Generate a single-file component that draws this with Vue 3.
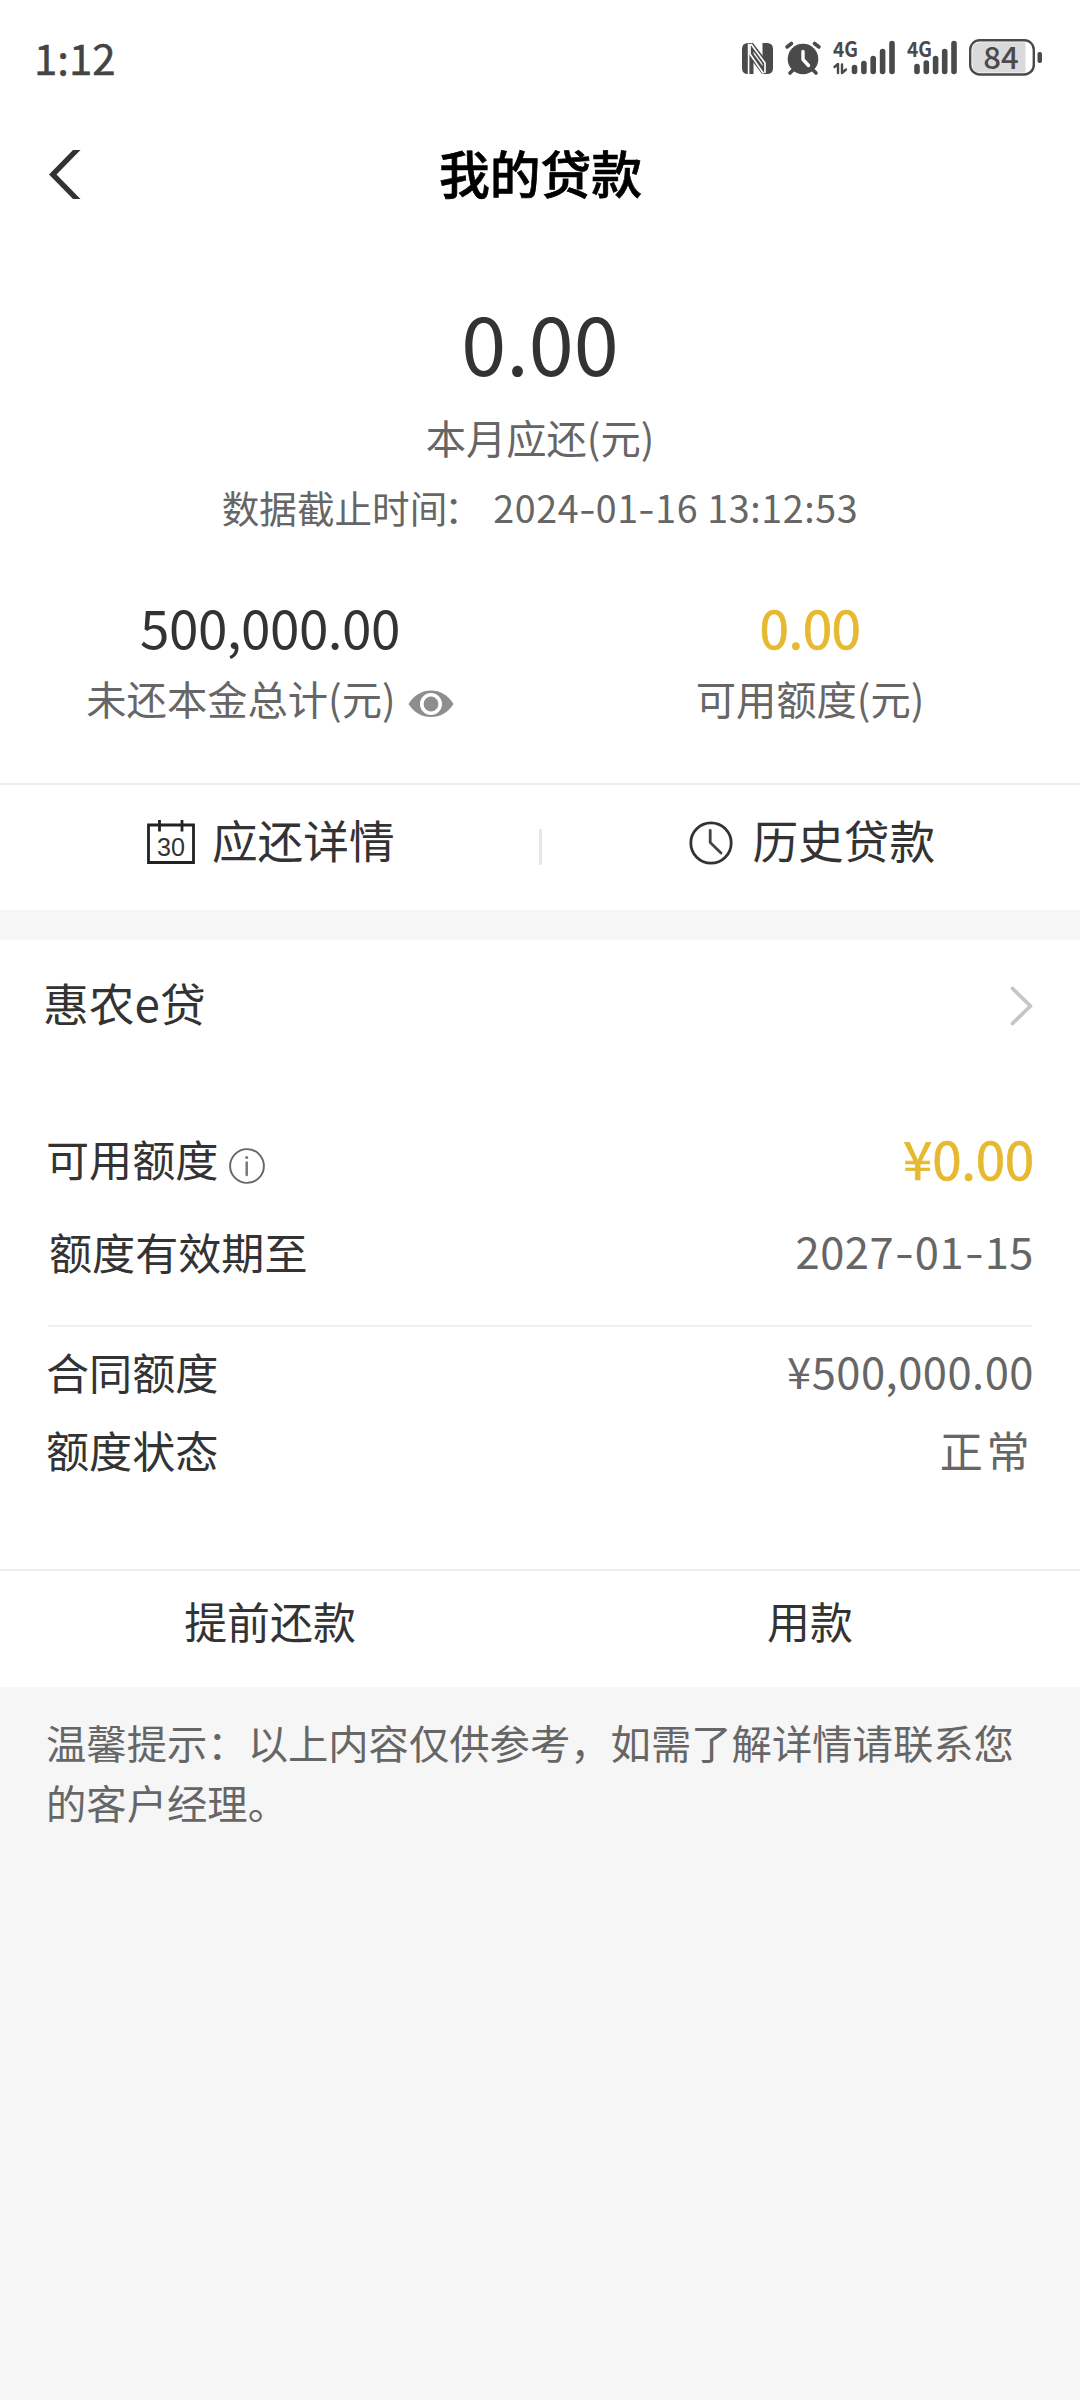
<script setup>
const stamp = '2024-01-16 13:12:53'
const expiry = '2027-01-15'
const contract = [
  { label: '合同额度', value: '¥500,000.00', cls: 'amount' },
  { label: '额度状态', value: '正常', cls: 'state' },
]
</script>

<template>
  <div class="page">
    <div class="status">
      <span class="time">1:12</span>
      <svg class="status-icons" width="304" height="64" viewBox="740 25 304 64">
        <g fill="#4a4a4a">
          <path d="M748 43H753L764 57.5V66L753.5 51.5V74H748Q742 74 742 68V49Q742 43 748 43Z" />
          <path d="M748.6 43.6V74" stroke="#fdfdfd" stroke-width="1.6" fill="none" />
          <path d="M767 74H762L751.5 60V51L762.5 66V43H767Q773 43 773 49V68Q773 74 767 74Z" />
          <path d="M750 44V54L763.5 73.5M765 73V63L751 44" stroke="#fdfdfd" stroke-width="1.7" fill="none" />
        </g>
        <g stroke="#4a4a4a" stroke-linecap="round" fill="none">
          <circle cx="803" cy="59" r="15.3" fill="#4a4a4a" stroke="none" />
          <path d="M787 47L791.500 43.500M819 47L814.500 43.500M790 73L794 69M816 73L812 69" stroke-width="3.600" />
          <path d="M803 51.500V59.500L808.500 65.500" stroke="#fff" stroke-width="3.400" stroke-linejoin="round" />
          <path d="M854.500 67.500V71.500M863.900 63.500V71.500M873.200 58.500V71.500M882.600 51.500V71.500M892 43.500V71.500" stroke-width="5.600" />
          <path d="M917 66.500V71.500M926.300 63V71.500M935.600 58.500V71.500M944.700 51.500V71.500M954 43.500V71.500" stroke-width="5.600" />
          <path d="M834.500 67L838 64V73M842 64.500V73L846 69.500" stroke-width="2.400" stroke-linejoin="round" />
        </g>
        <g class="net">
          <text x="833" y="57" textLength="25" lengthAdjust="spacingAndGlyphs">4G</text>
          <text x="907" y="57" textLength="25" lengthAdjust="spacingAndGlyphs">4G</text>
        </g>
        <rect x="970.200" y="40.200" width="63.600" height="34.300" rx="9.500" fill="#fff" stroke="#4a4a4a" stroke-width="2.400" />
        <path d="M980 42.300H1025.500V72.400H980Q972.300 72.400 972.300 64.500V50Q972.300 42.300 980 42.300Z" fill="#dadada" />
        <rect x="1037.500" y="52" width="4.500" height="11" rx="2" fill="#4a4a4a" />
        <text class="charge" x="1001" y="69" text-anchor="middle">84</text>
      </svg>
    </div>

    <header class="header">
      <svg class="back" width="32" height="49" viewBox="0 0 32 49">
        <path d="M24 0H31.500L7.500 24.500L31.500 49H24L0 24.500Z" fill="#333" />
      </svg>
      <h1>我的贷款</h1>
    </header>

    <section class="hero">
      <div class="due">0.00</div>
      <div class="due-label">本月应还(元)</div>
      <div class="stamp"><span class="stamp-label">数据截止时间</span><span class="colon">：</span><span class="stamp-time"><span v-for="(c, i) in stamp" :key="i" :class="{ dash: c === '-' }">{{ c }}</span></span></div>
      <div class="cols">
        <div class="col">
          <div class="num">500,000.00</div>
          <div class="label">
            未还本金总计(元)
            <svg width="46" height="28" viewBox="0 0 46 28">
              <path d="M0.500 14Q9 .5 23 .5T45.500 14Q37 27 23 27T.5 14Z" fill="#8e8e8e" />
              <circle cx="23" cy="14" r="9.200" fill="#8e8e8e" stroke="#fff" stroke-width="3.600" />
            </svg>
          </div>
        </div>
        <div class="col">
          <div class="num gold">0.00</div>
          <div class="label">可用额度(元)</div>
        </div>
      </div>
    </section>

    <nav class="links">
      <a class="link">
        <svg width="48" height="45" viewBox="0 0 48 45">
          <path d="M1.500 5H46.500V42.500H1.500ZM12.500 0V11.500M35 0V11.500" fill="none" stroke="#222" stroke-width="2.800" />
          <text class="day" x="24" y="35.500" text-anchor="middle" textLength="28" lengthAdjust="spacingAndGlyphs">30</text>
        </svg>
        <span>应还详情</span>
      </a>
      <i class="sep"></i>
      <a class="link history">
        <svg width="44" height="44" viewBox="0 0 44 44">
          <circle cx="22" cy="22" r="20.200" fill="none" stroke="#333" stroke-width="2.800" />
          <path d="M21.200 9.500V21.500L32 32" fill="none" stroke="#444" stroke-width="2.800" stroke-linecap="round" />
        </svg>
        <span>历史贷款</span>
      </a>
    </nav>

    <section class="card">
      <div class="row title">
        <span>惠农e贷</span>
        <svg width="23" height="40" viewBox="0 0 23 40">
          <path d="M2.500 2.500L20.500 20L2.500 37.500" fill="none" stroke="#c6c6c6" stroke-width="3.800" stroke-linecap="round" stroke-linejoin="round" />
        </svg>
      </div>
      <div class="row available">
        <span class="with-info">可用额度
          <svg width="36" height="36" viewBox="0 0 36 36">
            <circle cx="18" cy="18" r="16.900" fill="none" stroke="#666" stroke-width="1.900" />
            <path d="M17.700 14.500V27" stroke="#777" stroke-width="2.500" stroke-linecap="round" />
            <circle cx="17.700" cy="9.500" r="1.500" fill="#777" />
          </svg>
        </span>
        <b class="gold">¥0.00</b>
      </div>
      <div class="row valid">
        <span>额度有效期至</span>
        <b class="expiry"><span v-for="(c, i) in expiry" :key="i" :class="{ dash: c === '-' }">{{ c }}</span></b>
      </div>
      <hr />
      <div v-for="r in contract" :key="r.label" class="row detail">
        <span>{{ r.label }}</span><b :class="r.cls">{{ r.value }}</b>
      </div>
    </section>

    <div class="actions">
      <button>提前还款</button>
      <button>用款</button>
    </div>

    <p class="tip">温馨提示：以上内容仅供参考，如需了解详情请联系您的客户经理。</p>
  </div>
</template>

<style>
body {
  margin: 0;
  background: #f6f6f6;
}
</style>

<style scoped>
.page {
  width: 1080px;
  min-height: 2400px;
  background: #f6f6f6;
  font-family: "Noto Sans CJK SC", sans-serif;
  color: #333;
  white-space: nowrap;
}
.status {
  height: 114px;
  box-sizing: border-box;
  padding: 0 36px 0 34px;
  display: flex;
  justify-content: space-between;
  align-items: center;
  background: #fff;
}
.time {
  font-size: 42px;
  line-height: 60px;
  color: #444;
  -webkit-text-stroke: 0.500px #444;
}
.net text {
  font: 700 21px "Noto Sans CJK SC", sans-serif;
  fill: #4a4a4a;
}
.charge {
  font: 500 31px "Noto Sans CJK SC", sans-serif;
  fill: #4a4a4a;
}
.header {
  height: 116px;
  display: grid;
  grid-template-columns: 32px 1fr 32px;
  align-items: center;
  padding: 0 49px;
  background: #fff;
}
.back {
  margin-top: 5px;
}
h1 {
  margin: 0;
  text-align: center;
  font-size: 50.800px;
  line-height: 70px;
  font-weight: 500;
  color: #000;
  -webkit-text-stroke: 0.700px #000;
  padding-left: 1px;
}
.hero {
  background: #fff;
  padding: 66px 0 60px;
  text-align: center;
}
.due {
  font-size: 81px;
  line-height: 90px;
}
.due-label {
  margin-top: 26px;
  font-size: 40.300px;
  line-height: 50px;
  color: #666;
}
.stamp {
  margin-top: 20px;
  font-size: 37.600px;
  line-height: 50px;
  color: #666;
}
.colon {
  display: inline-block;
  width: 49px;
  margin-left: -3px;
  text-align: left;
}
.stamp-time {
  letter-spacing: 0.600px;
  white-space: pre;
}
.dash {
  display: inline-block;
  transform: scaleX(1.250);
  margin: 0 1.500px;
}
.cols {
  margin-top: 64px;
  display: flex;
}
.col {
  flex: 1;
}
.num {
  font-size: 53px;
  line-height: 60px;
  letter-spacing: -0.500px;
}
.gold {
  color: #e7b930;
  -webkit-text-stroke: 0.700px #e7b930;
}
.label {
  margin-top: 17px;
  display: flex;
  justify-content: center;
  align-items: center;
  gap: 12px;
  font-size: 40.300px;
  line-height: 50px;
  color: #666;
}
.label svg {
  margin-top: 12px;
}
.links {
  border-top: 2px solid #ededed;
  background: #fff;
  height: 108px;
  padding: 0 0 17px 3px;
  display: flex;
  align-items: center;
}
.link {
  flex: 1;
  display: flex;
  justify-content: center;
  align-items: center;
  gap: 17px;
  font-size: 45.700px;
  line-height: 60px;
}
.link svg {
  margin-top: 7px;
}
.link.history {
  gap: 19px;
  padding-left: 3px;
}
.day {
  font: 25px "Liberation Sans", sans-serif;
  fill: #333;
}
.sep {
  width: 3px;
  height: 36px;
  margin-top: 16px;
  background: #e6e6e6;
}
.card {
  margin-top: 30px;
  background: #fff;
  padding: 31px 47px 90px 46px;
}
.row {
  display: flex;
  justify-content: space-between;
  align-items: center;
  height: 60px;
  font-size: 43.100px;
  line-height: 60px;
}
.row b {
  font-weight: 400;
  color: #666;
  margin-right: -1px;
}
.title {
  font-size: 45.800px;
  margin-left: -3px;
}
.title > span {
  position: relative;
  top: 1px;
}
.title svg {
  margin-top: 10px;
}
.available {
  margin-top: 97px;
}
.with-info {
  display: flex;
  align-items: center;
  gap: 11px;
}
.with-info svg {
  margin-top: 16px;
}
.row b.gold {
  font-size: 53px;
  line-height: 58px;
  padding-bottom: 2px;
  letter-spacing: -0.300px;
  color: #e7b930;
}
.valid {
  margin-top: 33px;
  padding-left: 3px;
}
.expiry {
  font-size: 43.500px;
  letter-spacing: 0.500px;
}
.expiry .dash {
  margin: 0 2.500px;
}
.amount {
  font-size: 43.500px;
  letter-spacing: 0.500px;
}
hr {
  margin: 44px 1px 14px 2px;
  border: 0;
  height: 2px;
  background: #f0f0f0;
}
.detail + .detail {
  margin-top: 18px;
}
.row b.state {
  letter-spacing: 3.500px;
  margin-right: 0;
}
.actions {
  border-top: 2px solid #ededed;
  background: #fff;
  padding: 19px 0 37px;
  display: flex;
}
button {
  flex: 1;
  border: 0;
  padding: 0;
  background: none;
  font: inherit;
  color: inherit;
  font-size: 42.900px;
  line-height: 60px;
}
.tip {
  margin: 0;
  padding: 25px 46px 0 46px;
  font-size: 40.350px;
  line-height: 60px;
  color: #666;
  white-space: normal;
}
</style>
